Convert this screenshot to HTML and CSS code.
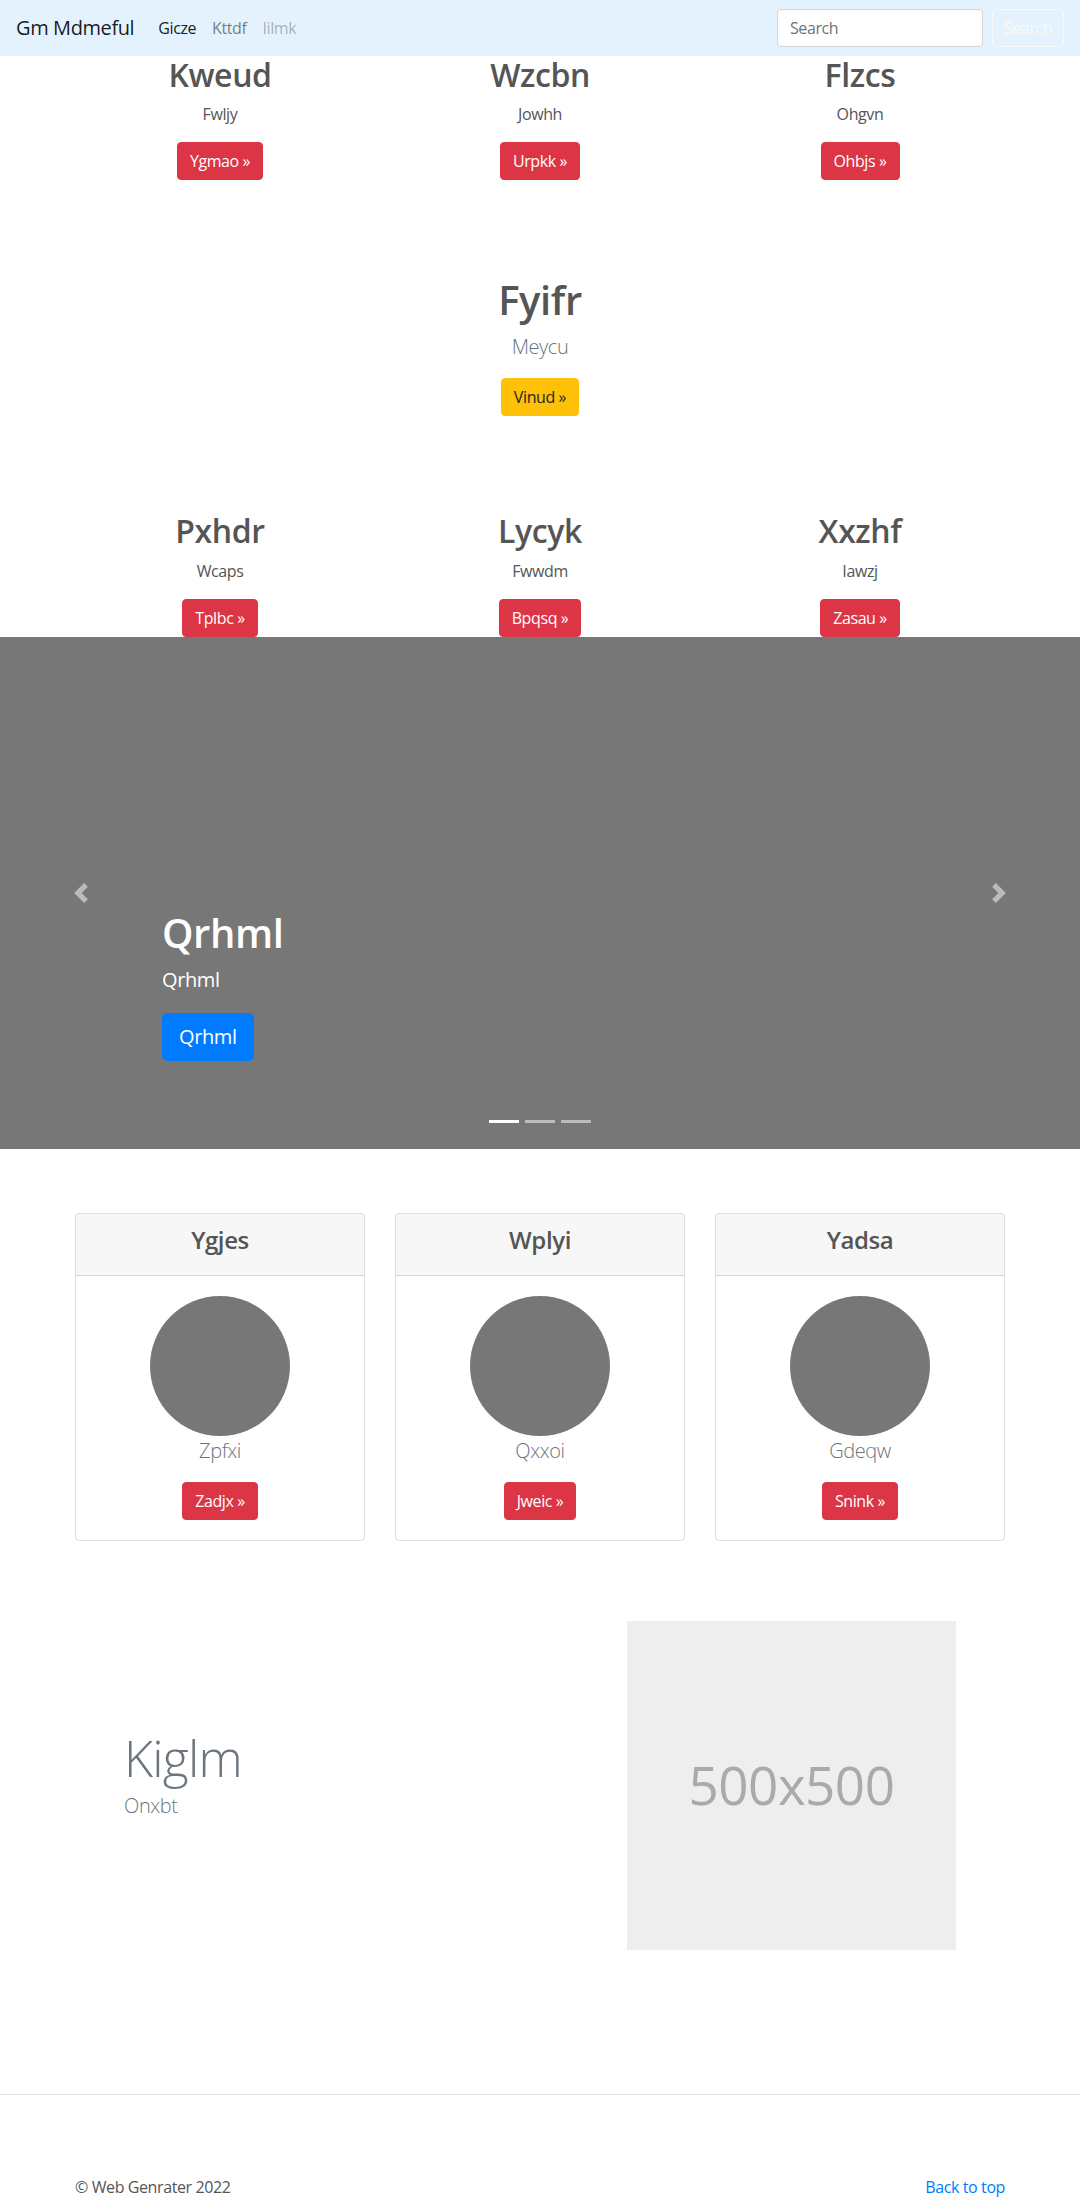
FILE: index.html
```html
<!DOCTYPE html>
<html lang="en">
<head>
<meta charset="utf-8">
<title>Gm Mdmeful</title>
<link rel="stylesheet" href="styles.css">
</head>
<body>
<nav class="navbar">
  <a class="brand" href="#">Gm Mdmeful</a>
  <div class="nav">
    <a class="nav-link active" href="#">Gicze</a>
    <a class="nav-link" href="#">Kttdf</a>
    <a class="nav-link disabled" href="#">Iilmk</a>
  </div>
  <form class="search">
    <input class="search-input" type="text" placeholder="Search">
    <button class="search-btn" type="button">Search</button>
  </form>
</nav>

<section class="container grid3 block">
  <div class="col">
    <h2>Kweud</h2>
    <p>Fwljy</p>
    <p class="btn-wrap"><a class="btn btn-danger" href="#">Ygmao &raquo;</a></p>
  </div>
  <div class="col">
    <h2>Wzcbn</h2>
    <p>Jowhh</p>
    <p class="btn-wrap"><a class="btn btn-danger" href="#">Urpkk &raquo;</a></p>
  </div>
  <div class="col">
    <h2>Flzcs</h2>
    <p>Ohgvn</p>
    <p class="btn-wrap"><a class="btn btn-danger" href="#">Ohbjs &raquo;</a></p>
  </div>
</section>

<section class="container center block spaced">
  <h1>Fyifr</h1>
  <p class="lead">Meycu</p>
  <p class="btn-wrap"><a class="btn btn-warning" href="#">Vinud &raquo;</a></p>
</section>

<section class="container grid3 block spaced">
  <div class="col">
    <h2>Pxhdr</h2>
    <p>Wcaps</p>
    <p class="btn-wrap"><a class="btn btn-danger" href="#">Tplbc &raquo;</a></p>
  </div>
  <div class="col">
    <h2>Lycyk</h2>
    <p>Fwwdm</p>
    <p class="btn-wrap"><a class="btn btn-danger" href="#">Bpqsq &raquo;</a></p>
  </div>
  <div class="col">
    <h2>Xxzhf</h2>
    <p>Iawzj</p>
    <p class="btn-wrap"><a class="btn btn-danger" href="#">Zasau &raquo;</a></p>
  </div>
</section>

<section class="carousel">
  <div class="caption">
    <h1>Qrhml</h1>
    <p>Qrhml</p>
    <div><a class="btn btn-lg btn-primary" href="#">Qrhml</a></div>
  </div>
  <a class="control control-prev" href="#">
    <svg width="20" height="20" viewBox="0 0 8 8"><path fill="#fff" d="M5.25 0l-4 4 4 4 1.5-1.5L4.25 4l2.5-2.5L5.25 0z"/></svg>
  </a>
  <a class="control control-next" href="#">
    <svg width="20" height="20" viewBox="0 0 8 8"><path fill="#fff" d="M2.75 0l-1.5 1.5 2.5 2.5-2.5 2.5 1.5 1.5 4-4-4-4z"/></svg>
  </a>
  <div class="indicators">
    <span class="active"></span><span></span><span></span>
  </div>
</section>

<section class="container grid3 cards">
  <div class="card">
    <div class="card-header"><h4>Ygjes</h4></div>
    <div class="card-body">
      <svg class="avatar" width="140" height="140" viewBox="0 0 140 140"><circle cx="70" cy="70" r="70" fill="#777"/></svg>
      <p class="lead">Zpfxi</p>
      <p class="btn-wrap"><a class="btn btn-danger" href="#">Zadjx &raquo;</a></p>
    </div>
  </div>
  <div class="card">
    <div class="card-header"><h4>Wplyi</h4></div>
    <div class="card-body">
      <svg class="avatar" width="140" height="140" viewBox="0 0 140 140"><circle cx="70" cy="70" r="70" fill="#777"/></svg>
      <p class="lead">Qxxoi</p>
      <p class="btn-wrap"><a class="btn btn-danger" href="#">Jweic &raquo;</a></p>
    </div>
  </div>
  <div class="card">
    <div class="card-header"><h4>Yadsa</h4></div>
    <div class="card-body">
      <svg class="avatar" width="140" height="140" viewBox="0 0 140 140"><circle cx="70" cy="70" r="70" fill="#777"/></svg>
      <p class="lead">Gdeqw</p>
      <p class="btn-wrap"><a class="btn btn-danger" href="#">Snink &raquo;</a></p>
    </div>
  </div>
</section>

<section class="featurette">
  <div class="feat-text">
    <h2 class="featurette-heading">Kiglm</h2>
    <p class="lead">Onxbt</p>
  </div>
  <div class="placeholder">500x500</div>
</section>

<hr class="divider">

<footer class="container footer">
  <p>&copy; Web Genrater 2022</p>
  <a href="#">Back to top</a>
</footer>
</body>
</html>
```

FILE: styles.css
```css
* { box-sizing: border-box; }

body {
  margin: 0;
  font-family: "Open Sans", "Liberation Sans", sans-serif;
  font-size: 16px;
  line-height: 1.5;
  letter-spacing: -0.025em;
  color: #555;
  background: #fff;
}

h1, h2, h4 {
  margin: 0 0 8px;
  font-weight: 600;
  line-height: 1.2;
}
h1 { font-size: 40px; }
h2 { font-size: 32px; }
h4 { font-size: 24px; }

p { margin: 0 0 16px; }

a { text-decoration: none; }

/* navbar */
.navbar {
  display: flex;
  align-items: center;
  height: 56px;
  padding: 8px 16px;
  background: #e3f2fd;
}
.brand {
  font-size: 20px;
  line-height: 30px;
  margin-right: 16px;
  color: rgba(0, 0, 0, .9);
}
.nav { display: flex; flex: 1; }
.nav-link { padding: 8px; color: rgba(0, 0, 0, .5); }
.nav-link.active { color: rgba(0, 0, 0, .9); }
.nav-link.disabled { color: rgba(0, 0, 0, .3); }
.search { display: flex; gap: 9px; margin: 0; }
.search-input {
  width: 206px;
  height: 38px;
  padding: 6px 12px;
  font: inherit;
  letter-spacing: inherit;
  border: 1px solid #ced4da;
  border-radius: 4px;
  background: #fff;
  color: #495057;
}
.search-input::placeholder { color: #6c757d; }
.search-btn {
  width: 72px;
  height: 38px;
  padding: 0;
  font: inherit;
  letter-spacing: inherit;
  border: 1px solid #f8f9fa;
  border-radius: 4px;
  background: transparent;
  color: #f8f9fa;
}

/* layout */
.container { width: 930px; margin: 0 auto; }
.grid3 {
  display: grid;
  grid-template-columns: repeat(3, 1fr);
  column-gap: 30px;
}
.block { text-align: center; }
.center { text-align: center; }
.spaced { margin-top: 96px; }
.btn-wrap { margin: 0; }

.lead { font-size: 20px; font-weight: 300; color: #6c757d; }

/* buttons */
.btn {
  display: inline-block;
  padding: 6px 12px;
  font-size: 16px;
  line-height: 24px;
  border: 1px solid transparent;
  border-radius: 4px;
}
.btn-danger { background: #dc3545; border-color: #dc3545; color: #fff; }
.btn-warning { background: #ffc107; border-color: #ffc107; color: #212529; }
.btn-primary { background: #007bff; border-color: #007bff; color: #fff; }
.btn-lg { padding: 8px 16px; font-size: 20px; line-height: 30px; border-radius: 5px; }

/* carousel */
.carousel {
  position: relative;
  height: 512px;
  background: #777;
  display: flex;
  align-items: flex-end;
  padding: 0 0 88px 162px;
}
.caption { color: #fff; }
.caption h1 { color: #fff; }
.caption p { font-size: 20px; line-height: 30px; margin: 0 0 18px; }
.control {
  position: absolute;
  top: 0;
  bottom: 0;
  width: 162px;
  display: flex;
  align-items: center;
  justify-content: center;
}
.control svg { opacity: .5; display: block; }
.control-prev { left: 0; }
.control-next { right: 0; }
.indicators {
  position: absolute;
  left: 0;
  right: 0;
  bottom: 26px;
  display: flex;
  justify-content: center;
  gap: 6px;
}
.indicators span { width: 30px; height: 3px; background: #fff; opacity: .5; }
.indicators span.active { opacity: 1; }

/* cards */
.cards { margin-top: 64px; }
.card {
  border: 1px solid rgba(0, 0, 0, .125);
  border-radius: 4px;
  text-align: center;
  overflow: hidden;
}
.card-header {
  background: rgba(0, 0, 0, .03);
  padding: 12px 20px;
  border-bottom: 1px solid rgba(0, 0, 0, .125);
}
.card-body { padding: 20px; }
.avatar { display: block; margin: 0 auto; }

/* featurette */
.featurette {
  display: flex;
  align-items: center;
  justify-content: space-between;
  margin-top: 80px;
  padding: 0 124px;
}
.featurette-heading {
  font-size: 50px;
  font-weight: 300;
  line-height: 1;
  letter-spacing: -0.8px;
  color: #6c757d;
}
.placeholder {
  width: 329px;
  height: 329px;
  background: #eee;
  color: #aaa;
  font-size: 53px;
  letter-spacing: -0.01em;
  display: flex;
  align-items: center;
  justify-content: center;
}

/* footer */
.divider {
  margin: 144px 0 0;
  border: 0;
  border-top: 1px solid #e5e5e5;
}
.footer {
  display: flex;
  justify-content: space-between;
  padding: 80px 0 32px;
}
.footer p { margin: 0; }
.footer a { color: #007bff; }
```
